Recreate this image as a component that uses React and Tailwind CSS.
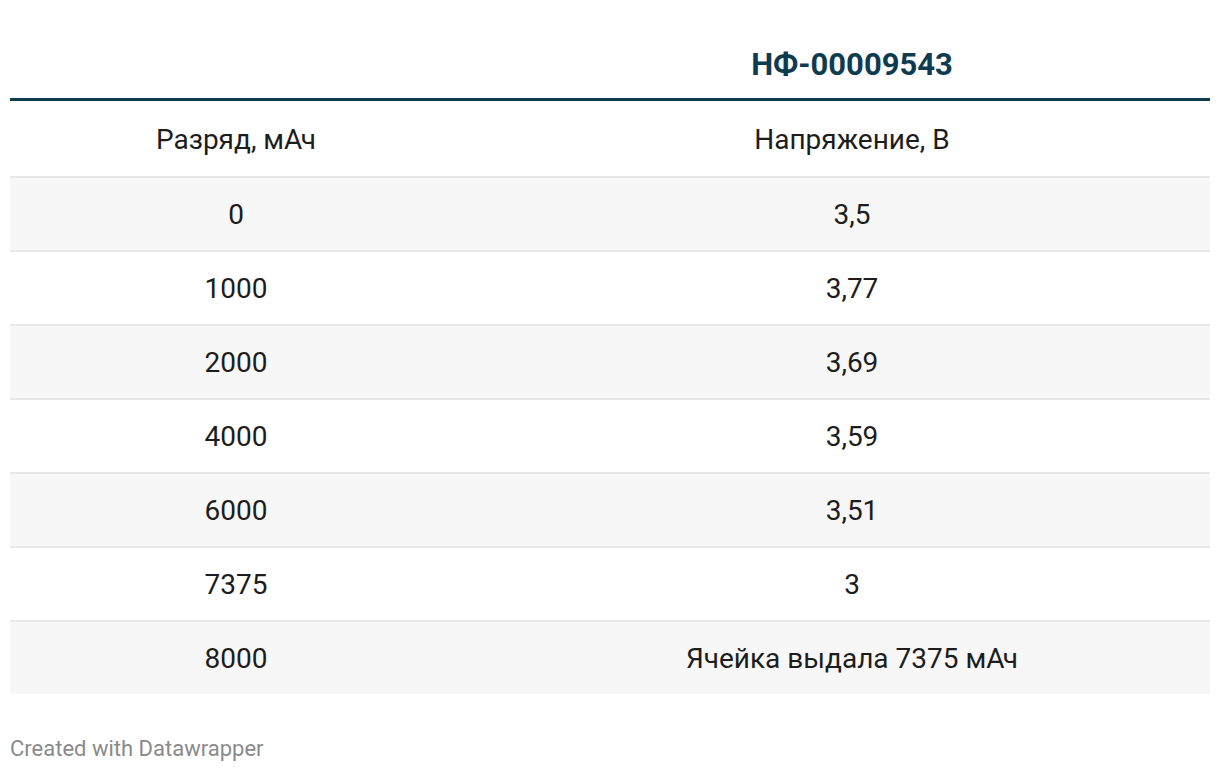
import React from 'react';

const rows = [
  ['0', '3,5'],
  ['1000', '3,77'],
  ['2000', '3,69'],
  ['4000', '3,59'],
  ['6000', '3,51'],
  ['7375', '3'],
  ['8000', 'Ячейка выдала 7375 мАч'],
];

const App = () => {
  return (
    <div className="w-[1220px] h-[772px] bg-white font-['Roboto',sans-serif] text-[#1d1d1d]">
      <div className="px-[10px]">
        {/* title row */}
        <div className="grid grid-cols-[452px_1fr] h-[98px] border-b-[3px] border-[#0f3b4f] box-content">
          <div />
          <div className="pl-[32px] flex items-center justify-center pt-[30px]">
            <span className="text-[31px] font-bold text-[#0f3b4f] leading-none">НФ-00009543</span>
          </div>
        </div>

        {/* header */}
        <div className="grid grid-cols-[452px_1fr] h-[75px] pt-[2px] text-[28px] leading-none">
          <div className="flex items-center justify-center">Разряд, мАч</div>
          <div className="pl-[32px] flex items-center justify-center">Напряжение, В</div>
        </div>

        {rows.map((r, i) => (
          <div
            key={i}
            className={`grid grid-cols-[452px_1fr] h-[74px] pt-[1px] border-t-2 border-[#e8e8e8] text-[28px] leading-none ${i % 2 === 0 ? 'bg-[#f7f7f7]' : 'bg-white'}`}
          >
            <div className="flex items-center justify-center">{r[0]}</div>
            <div className="pl-[32px] flex items-center justify-center">{r[1]}</div>
          </div>
        ))}

        <div className="pt-[44px] text-[22px] leading-none text-[#8a8a8a]">Created with Datawrapper</div>
      </div>
    </div>
  );
};

export default App;
